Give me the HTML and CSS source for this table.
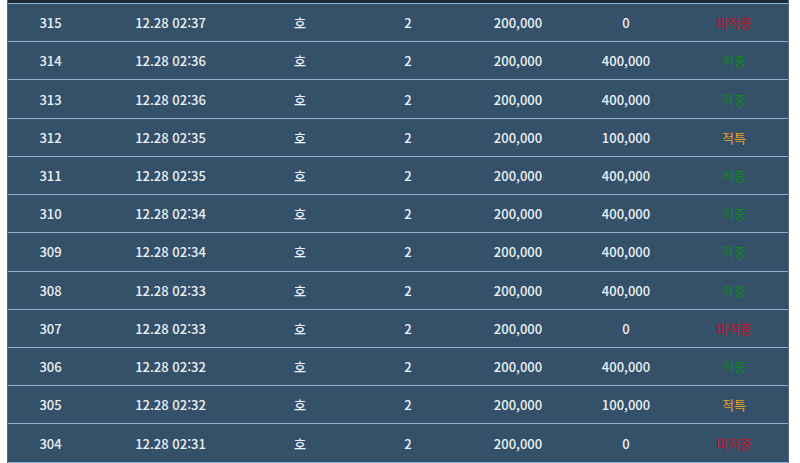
FILE: index.html
```html
<!DOCTYPE html>
<html lang="ko">
<head>
<meta charset="utf-8">
<link rel="stylesheet" href="styles.css">
</head>
<body>
<div class="board">
  <div class="head-stub"></div>
  <div class="row"><span>315</span><span>12.28 02:37</span><span>호</span><span>2</span><span>200,000</span><span>0</span><span class="st red">미적중</span></div>
  <div class="row"><span>314</span><span>12.28 02:36</span><span>호</span><span>2</span><span>200,000</span><span>400,000</span><span class="st green">적중</span></div>
  <div class="row"><span>313</span><span>12.28 02:36</span><span>호</span><span>2</span><span>200,000</span><span>400,000</span><span class="st green">적중</span></div>
  <div class="row"><span>312</span><span>12.28 02:35</span><span>호</span><span>2</span><span>200,000</span><span>100,000</span><span class="st orange">적특</span></div>
  <div class="row"><span>311</span><span>12.28 02:35</span><span>호</span><span>2</span><span>200,000</span><span>400,000</span><span class="st green">적중</span></div>
  <div class="row"><span>310</span><span>12.28 02:34</span><span>호</span><span>2</span><span>200,000</span><span>400,000</span><span class="st green">적중</span></div>
  <div class="row"><span>309</span><span>12.28 02:34</span><span>호</span><span>2</span><span>200,000</span><span>400,000</span><span class="st green">적중</span></div>
  <div class="row"><span>308</span><span>12.28 02:33</span><span>호</span><span>2</span><span>200,000</span><span>400,000</span><span class="st green">적중</span></div>
  <div class="row"><span>307</span><span>12.28 02:33</span><span>호</span><span>2</span><span>200,000</span><span>0</span><span class="st red">미적중</span></div>
  <div class="row"><span>306</span><span>12.28 02:32</span><span>호</span><span>2</span><span>200,000</span><span>400,000</span><span class="st green">적중</span></div>
  <div class="row"><span>305</span><span>12.28 02:32</span><span>호</span><span>2</span><span>200,000</span><span>100,000</span><span class="st orange">적특</span></div>
  <div class="row"><span>304</span><span>12.28 02:31</span><span>호</span><span>2</span><span>200,000</span><span>0</span><span class="st red">미적중</span></div>
</div>
</body>
</html>
```
FILE: styles.css
```css
html, body {
  margin: 0;
  padding: 0;
  background: #ffffff;
  overflow: hidden;
}
body {
  font-family: "Noto Sans CJK KR", "Noto Sans", sans-serif;
  font-size: 13px;
  font-weight: 500;
  color: #eef1f4;
}
.board {
  margin-left: 7px;
  width: 782px;
  background: #35516a;
  border-left: 1px solid #4d6a82;
  border-right: 1px solid #4d6a82;
  box-sizing: border-box;
}
.head-stub {
  height: 3px;
  background: #1e2a35;
  border-bottom: 1px solid #8cb4d2;
}
.row {
  display: grid;
  grid-template-columns: 85px 155px 104px 112px 108px 108px 108px;
  height: 38.22px;
  box-sizing: border-box;
  border-bottom: 1px solid #8cb4d2;
  align-items: center;
  text-align: center;
}
.row span {
  line-height: 1;
}
.st {
  font-weight: 400;
}
.st.red { color: #c8121c; }
.st.green { color: #0d8a12; }
.st.orange { color: #f0a21c; }
```
